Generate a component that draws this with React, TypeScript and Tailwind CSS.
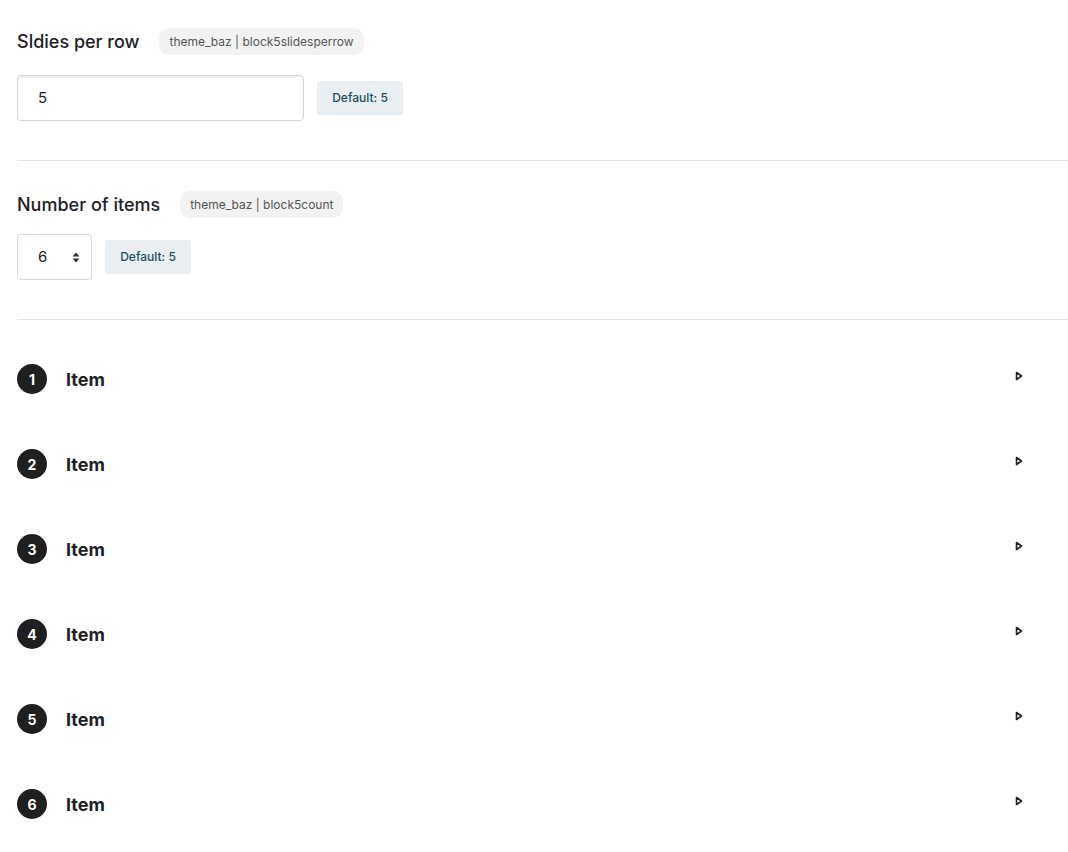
import React from 'react'

function Badge({ children }: { children: React.ReactNode }) {
  return (
    <span className="inline-flex h-[27px] items-center rounded-[10px] bg-[#f2f2f2] px-[10px] text-[12px] text-[#555]">
      {children}
    </span>
  )
}

function DefaultTag() {
  return (
    <span className="inline-flex h-[34px] w-[86px] items-center justify-center rounded-[3px] bg-[#e8eef1] text-[12px] font-medium text-[#1d4e5e]">
      Default: 5
    </span>
  )
}

function Caret() {
  return (
    <svg width="8" height="10" viewBox="0 0 8 10" className="text-[#222]">
      <path d="M1.5 1.5 L6.5 5 L1.5 8.5 Z" fill="none" stroke="currentColor" strokeWidth="1.6" strokeLinejoin="round" />
    </svg>
  )
}

export default function App() {
  const items = [1, 2, 3, 4, 5, 6]

  return (
    <div className="min-h-[852px] bg-white pl-[17px] pt-[28px] text-[#1d2125]" style={{ fontFamily: 'Inter, "Noto Sans", sans-serif' }}>
      <div className="flex items-center gap-[20px]">
        <h3 className="text-[18px] font-medium">Sldies per row</h3>
        <Badge>theme_baz | block5slidesperrow</Badge>
      </div>
      <div className="mt-[20px] flex items-center gap-[13px]">
        <div className="flex h-[46px] w-[287px] items-center rounded-[4px] border border-[#d5d5d5] pl-[20px] text-[15px] shadow-[inset_0_2px_2px_rgba(0,0,0,0.06)]">
          5
        </div>
        <DefaultTag />
      </div>
      <hr className="mb-[30px] mt-[39px] border-[#e2e2e2]" />

      <div className="flex items-center gap-[20px]">
        <h3 className="text-[18px] font-medium">Number of items</h3>
        <Badge>theme_baz | block5count</Badge>
      </div>
      <div className="mt-[16px] flex items-center gap-[13px]">
        <div className="flex h-[46px] w-[75px] items-center justify-between rounded-[4px] border border-[#d5d5d5] pl-[20px] pr-[11px] text-[15px]">
          <span>6</span>
          <svg width="8" height="11" viewBox="0 0 8 11">
            <path d="M4 0.5 L7.5 4.5 H0.5 Z M4 10.5 L7.5 6.5 H0.5 Z" fill="#333" />
          </svg>
        </div>
        <DefaultTag />
      </div>
      <hr className="mt-[39px] border-[#e2e2e2]" />

      <div className="pt-[44px]">
        {items.map((n) => (
          <div key={n} className="flex h-[85px] items-start justify-between pr-[45px]">
            <div className="flex items-center gap-[19px]">
              <span className="flex h-[30px] w-[30px] items-center justify-center rounded-full bg-[#1f1f1f] text-[14px] font-bold text-white">
                {n}
              </span>
              <span className="text-[18px] font-bold">Item</span>
            </div>
            <div className="mt-[7px]">
              <Caret />
            </div>
          </div>
        ))}
      </div>
    </div>
  )
}
